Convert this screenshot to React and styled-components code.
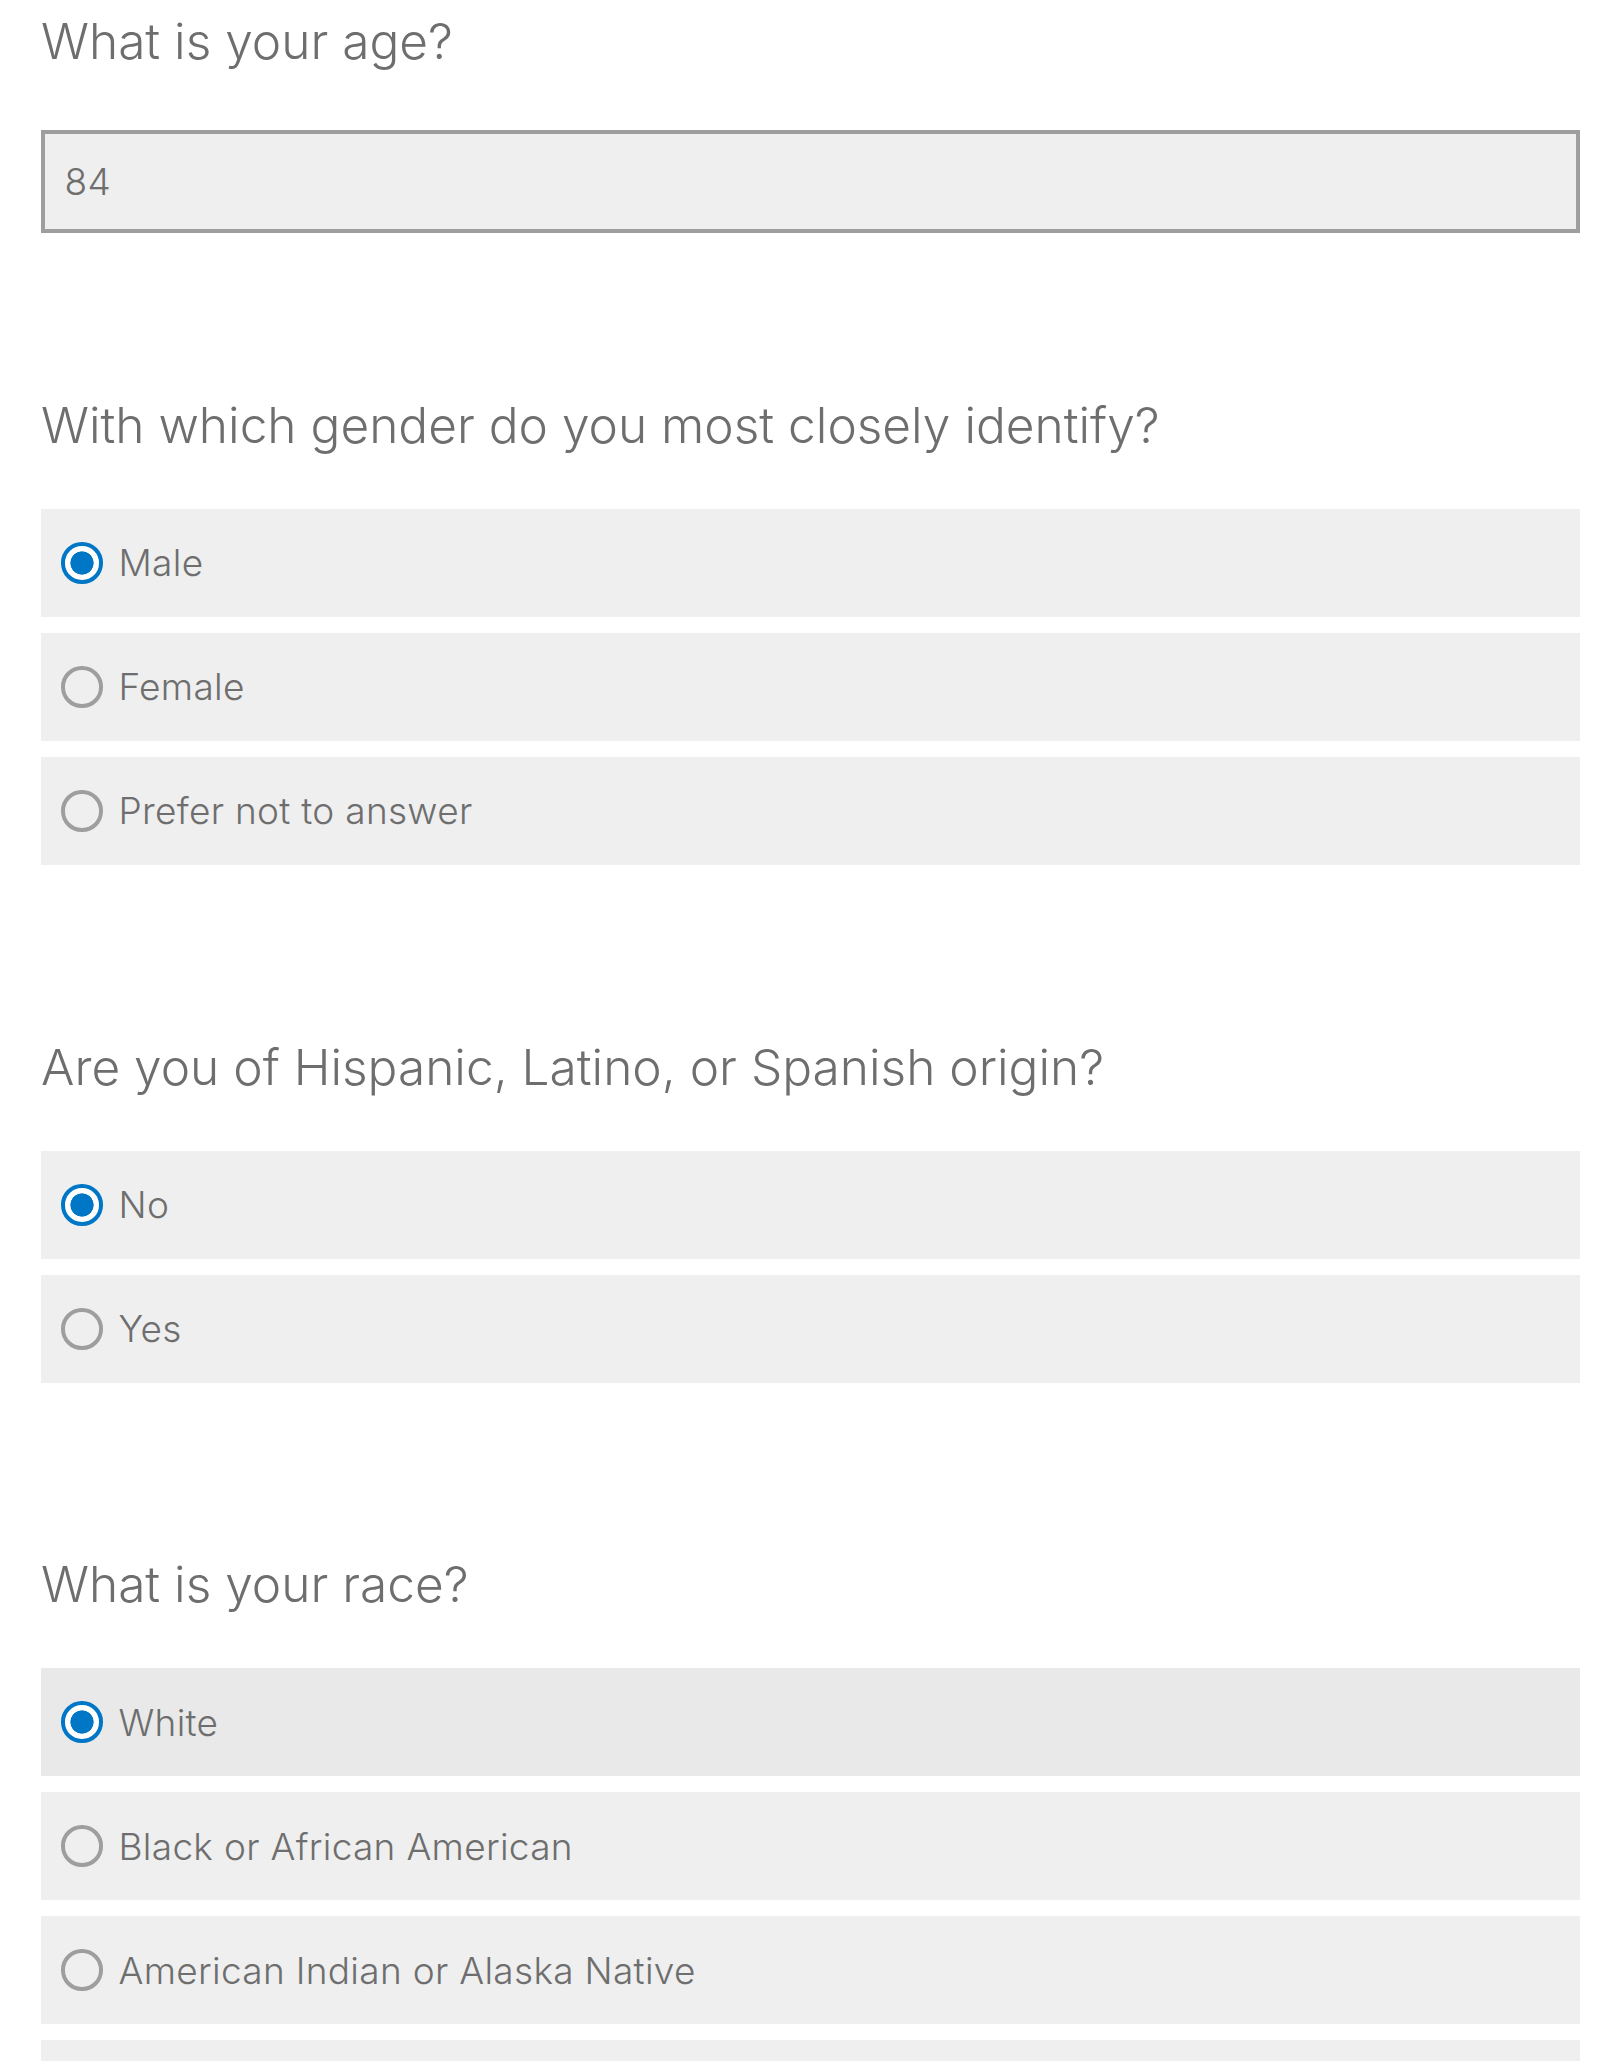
import React from "react";
import styled, { createGlobalStyle } from "styled-components";

const GlobalStyle = createGlobalStyle`
  html, body { margin: 0; padding: 0; background: #ffffff; }
  body { font-family: Inter, "Open Sans", sans-serif; }
  * { box-sizing: border-box; }
`;

const TEXT = "#6e6e6e";
const BLUE = "#0077c6";

const Page = styled.main`
  display: flex;
  flex-direction: column;
  padding: 11.25px 40px 40px 41px;
  font-family: Inter, "Open Sans", sans-serif;
  font-weight: 300;
  color: ${TEXT};
`;

const Section = styled.section`
  display: flex;
  flex-direction: column;
  margin-bottom: ${(p) => p.$after}px;
`;

const Title = styled.h2`
  margin: 0 0 ${(p) => p.$gap}px 0;
  font-size: 49.6px;
  line-height: 60px;
  font-weight: 300;
  color: ${TEXT};
  white-space: nowrap;
`;

const Field = styled.input`
  display: block;
  width: 100%;
  height: 103.33px;
  border: 4px solid #9e9e9e;
  border-radius: 0;
  background: #efefef;
  padding: 0 0 0 19.5px;
  font-family: Inter, "Open Sans", sans-serif;
  font-weight: 300;
  font-size: 37px;
  letter-spacing: 0.3px;
  color: ${TEXT};
  outline: none;
`;

const Options = styled.div`
  display: flex;
  flex-direction: column;
  gap: 16.67px;
`;

const Option = styled.label`
  display: flex;
  align-items: center;
  gap: 16px;
  height: 107.33px;
  padding: 0 20px;
  background: ${(p) => (p.$hover ? "#e9e9e9" : "#efefef")};
  cursor: pointer;
`;

const Radio = styled.span`
  flex: none;
  width: 41.5px;
  height: 41.5px;
  border-radius: 50%;
  border: ${(p) => (p.$checked ? `4.4px solid ${BLUE}` : "4px solid #9e9e9e")};
  background: ${(p) =>
    p.$checked
      ? `radial-gradient(circle, ${BLUE} 0 11.3px, #ffffff 11.9px)`
      : "transparent"};
`;

const OptionText = styled.span`
  font-size: 37px;
  letter-spacing: 0.3px;
  font-weight: 300;
  color: ${TEXT};
  white-space: nowrap;
`;

const questions = [
  {
    title: "With which gender do you most closely identify?",
    options: ["Male", "Female", "Prefer not to answer"],
    checked: 0,
    after: 172.33,
  },
  {
    title: "Are you of Hispanic, Latino, or Spanish origin?",
    options: ["No", "Yes"],
    checked: 0,
    after: 171.5,
  },
  {
    title: "What is your race?",
    options: [
      "White",
      "Black or African American",
      "American Indian or Alaska Native",
      "Asian",
    ],
    checked: 0,
    hover: 0,
    after: 0,
  },
];

export default function App() {
  return (
    <>
      <GlobalStyle />
      <Page>
        <Section $after={161.67}>
          <Title $gap={58.75}>What is your age?</Title>
          <Field type="text" readOnly defaultValue="84" />
        </Section>
        {questions.map((q) => (
          <Section key={q.title} $after={q.after}>
            <Title $gap={54.33}>{q.title}</Title>
            <Options>
              {q.options.map((o, i) => (
                <Option key={o} $hover={q.hover === i}>
                  <Radio $checked={q.checked === i} />
                  <OptionText>{o}</OptionText>
                </Option>
              ))}
            </Options>
          </Section>
        ))}
      </Page>
    </>
  );
}
